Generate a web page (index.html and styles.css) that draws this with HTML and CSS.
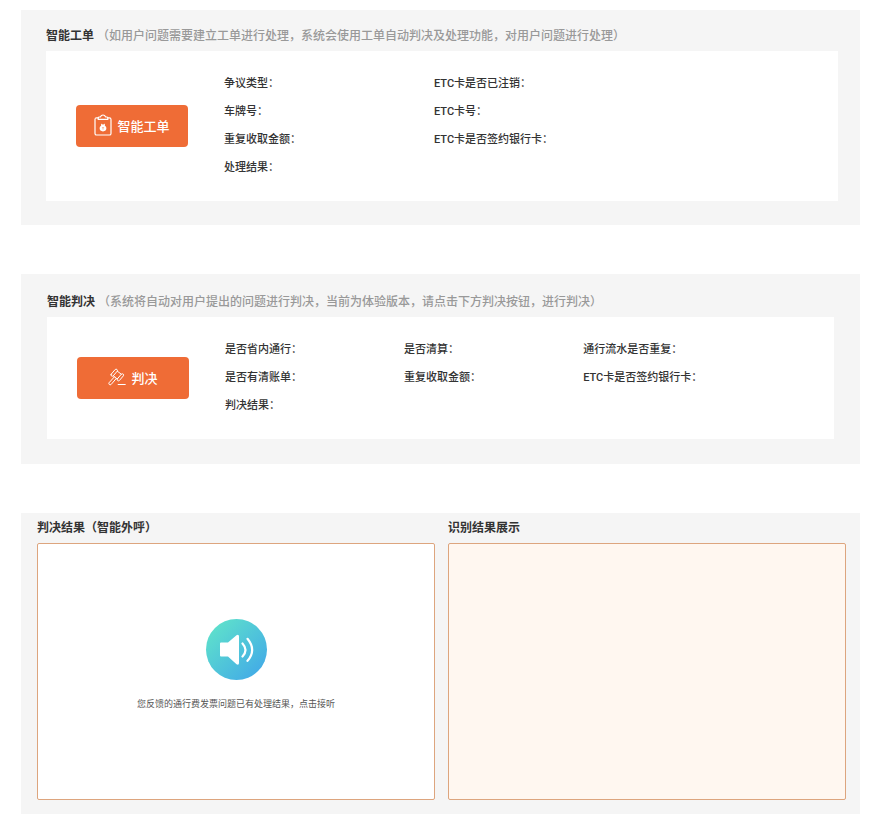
FILE: index.html
```html
<!DOCTYPE html>
<html lang="zh-CN">
<head>
  <meta charset="UTF-8" />
  <meta name="viewport" content="width=device-width, initial-scale=1.0"/>
  <title>智能工单</title>
  <link rel="stylesheet" href="styles.css">
</head>
<body>
  <main class="page">
    <section class="panel order">
      <h2>智能工单<span class="tip">（如用户问题需要建立工单进行处理，系统会使用工单自动判决及处理功能，对用户问题进行处理）</span></h2>
      <div class="card">
        <button class="action" type="button">
          <svg width="18" height="22" viewBox="0 0 18 22" fill="none" stroke="#fff" stroke-width="1.2" stroke-linejoin="round">
            <path d="M4.5 3.8H2.6Q1 3.8 1 5.4V19.4Q1 21 2.6 21H15.4Q17 21 17 19.4V5.4Q17 3.8 15.4 3.8H13.5"/>
            <path d="M4.2 5.4V3.9Q4.2 3.1 5 3H6.3Q7.3 1 9 1T11.7 3H13Q13.8 3.1 13.8 3.9V5.4Z"/>
            <path d="M7 9.6L8.2 10.4 9 10.2 9.8 10.4 11 9.6 10.8 11.4Q12.4 12.5 12.4 14.1A3.4 3.3 0 0 1 5.6 14.1Q5.6 12.5 7.2 11.4Z" fill="#fff" stroke="none"/>
            <path d="M8 13L9 14.2 10 13M9 14.2V15.6" stroke="#ef6c36" stroke-width=".5"/>
          </svg>
          智能工单
        </button>
        <ul class="fields">
          <li>争议类型：</li>
          <li>ETC卡是否已注销：</li>
          <li>车牌号：</li>
          <li>ETC卡号：</li>
          <li>重复收取金额：</li>
          <li>ETC卡是否签约银行卡：</li>
          <li>处理结果：</li>
        </ul>
      </div>
    </section>

    <section class="panel judge">
      <h2>智能判决<span class="tip">（系统将自动对用户提出的问题进行判决，当前为体验版本，请点击下方判决按钮，进行判决）</span></h2>
      <div class="card">
        <button class="action" type="button">
          <svg width="18" height="18" viewBox="0 0 18 18" fill="none" stroke="#fff" stroke-width="1" stroke-linejoin="round" stroke-linecap="round">
            <path d="M3.2 6.2L7.2 1.5Q8.1.8 9 1.5T9.2 3.2L5.2 7.9Q4.3 8.6 3.4 7.9T3.2 6.2Z"/>
            <path d="M9.4 10.8L13.4 6.1Q14.3 5.4 15.2 6.1T15.4 7.8L11.4 12.5Q10.5 13.2 9.6 12.5T9.4 10.8Z"/>
            <path d="M9.3 3.2L13.3 6.2M5.4 7.9L9.2 11"/>
            <path d="M6.4 8.8L1 14.8Q.6 15.8 1.3 16.5T3.1 16.5L8.3 10.4"/>
            <path d="M10.2 16.5H17.2" stroke-width="1.2"/>
          </svg>
          判决
        </button>
        <ul class="fields">
          <li>是否省内通行：</li>
          <li>是否清算：</li>
          <li>通行流水是否重复：</li>
          <li>是否有清账单：</li>
          <li>重复收取金额：</li>
          <li>ETC卡是否签约银行卡：</li>
          <li>判决结果：</li>
        </ul>
      </div>
    </section>

    <section class="panel results">
      <div class="result">
        <h3>判决结果（智能外呼）</h3>
        <div class="box call">
          <button class="play" type="button" aria-label="点击接听">
            <svg width="61" height="61" viewBox="0 0 61 61">
              <path d="M15 23.5H22L30.5 16.2Q33 15 33 17.5V44Q33 46.5 30.5 45.3L22 37.5H15Q14 37.5 14 36.5V24.5Q14 23.5 15 23.5Z" fill="#fff"/>
              <path d="M36.5 24.5Q42.5 31 36.5 37.5M41.5 19.8Q50.8 31 41.5 41.8" fill="none" stroke="#fff" stroke-width="2.2" stroke-linecap="round"/>
            </svg>
          </button>
          <p>您反馈的通行费发票问题已有处理结果，点击接听</p>
        </div>
      </div>
      <div class="result">
        <h3>识别结果展示</h3>
        <div class="box recognized"></div>
      </div>
    </section>
  </main>
</body>
</html>
```
FILE: styles.css
```css
:root {
  --orange: #ef6c36;
  --border: #dda57e;
  --panel-bg: #f5f5f5;
  --text-color: #333;
}
* {
  box-sizing: border-box;
}
body {
  margin: 0;
  font-family: Roboto, "Noto Sans CJK SC", sans-serif;
  background-color: #fff;
  color: var(--text-color);
}
.page {
  display: flex;
  flex-direction: column;
  gap: 49px;
  padding: 10px 20px 16px 21px;
}
.panel {
  background-color: var(--panel-bg);
}
h2, h3 {
  margin: 0;
  font-size: 12px;
  line-height: 20px;
}
.order {
  padding: 16px 22px 24px 25px;
}
.judge {
  padding: 18px 26px 25px 26px;
}
.panel h2 {
  margin-bottom: 5px;
}
.tip {
  margin-left: 3px;
  color: #999;
  font-weight: 500;
}
.card {
  display: flex;
  align-items: center;
  gap: 36px;
  padding: 19px 0 19px 30px;
  background-color: #fff;
}
.action {
  display: flex;
  align-items: center;
  justify-content: center;
  gap: 5px;
  flex: none;
  width: 112px;
  height: 42px;
  padding: 0 0 2px;
  background-color: var(--orange);
  color: #fff;
  border: none;
  border-radius: 4px;
  font-family: inherit;
  font-size: 13px;
  font-weight: 500;
  cursor: pointer;
}
.fields {
  flex: 1;
  display: grid;
  margin: 0;
  padding: 0;
  list-style: none;
  font-size: 11px;
  font-weight: 500;
  line-height: 28px;
}
.order .fields {
  grid-template-columns: 13fr 25fr;
}
.judge .fields {
  grid-template-columns: 5fr 5fr 7fr;
}
.results {
  display: grid;
  grid-template-columns: 1fr 1fr;
  gap: 13px;
  padding: 5px 14px 14px 16px;
}
.box {
  min-height: 257px;
  margin-top: 5px;
  border: 1px solid var(--border);
  border-radius: 2px;
}
.call {
  display: flex;
  flex-direction: column;
  align-items: center;
  justify-content: center;
  gap: 14px;
  padding-bottom: 10px;
  background-color: #fff;
}
.call p {
  margin: 0;
  color: #555;
  font-size: 9px;
  line-height: 20px;
}
.play {
  display: flex;
  padding: 0;
  border: none;
  border-radius: 50%;
  background: linear-gradient(135deg, #62e8c8, #3fa4ea);
  cursor: pointer;
}
.recognized {
  background-color: #fff7f0;
}
```
